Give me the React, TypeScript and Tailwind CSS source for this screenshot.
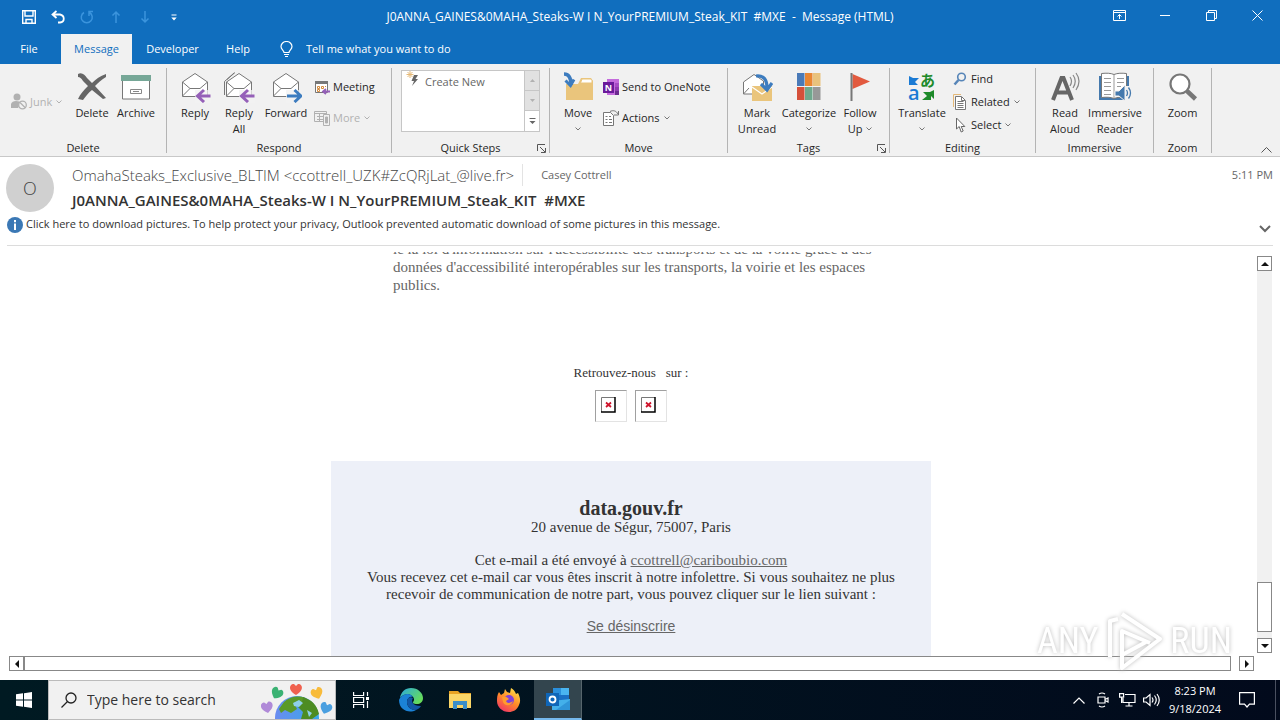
import type { ReactNode } from "react";
import clsx from "clsx";

/* ---------- Small shared pieces ---------- */

function Caret({ className }: { className?: string }) {
  return (
    <svg width="6" height="4" viewBox="0 0 6 4" className={clsx("shrink-0", className)} fill="none" stroke="currentColor">
      <path d="M.5.5 3 3 5.500.5" />
    </svg>
  );
}

interface LargeButtonProps {
  icon: ReactNode;
  lines: string[];
  width: string;
  caret?: "below" | "inline";
}

function LargeButton({ icon, lines, width, caret }: LargeButtonProps) {
  return (
    <button className={clsx("flex flex-col items-center whitespace-nowrap leading-4", width)}>
      <span className="flex h-[37px] items-center justify-center">{icon}</span>
      {lines.map((line, i) => (
        <span key={line} className="flex items-center gap-1">
          {line}
          {caret === "inline" && i === lines.length - 1 && <Caret className="text-[#777]" />}
        </span>
      ))}
      {caret === "below" && <Caret className="mt-1.5 text-[#777]" />}
    </button>
  );
}

interface SmallButtonProps {
  icon: ReactNode;
  label: string;
  caret?: boolean;
  disabled?: boolean;
}

function SmallButton({ icon, label, caret, disabled }: SmallButtonProps) {
  return (
    <button disabled={disabled} className={clsx("flex items-center whitespace-nowrap leading-4", disabled && "text-[#b1b1b1]")}>
      <span className="mr-[3px] flex w-4 justify-center">{icon}</span>
      {label}
      {caret && <Caret className={clsx("ml-1", disabled ? "text-[#b1b1b1]" : "text-[#777]")} />}
    </button>
  );
}

interface GroupProps {
  label: string;
  width: string;
  launcher?: boolean;
  children: ReactNode;
}

function Group({ label, width, launcher, children }: GroupProps) {
  return (
    <section className={clsx("relative flex shrink-0 flex-col border-r border-[#b4b4b4]", width)}>
      <div className="flex min-h-0 flex-1 items-start">{children}</div>
      <p className="text-center leading-[11px]">{label}</p>
      {launcher && (
        <button aria-label={`${label} options`} className="absolute right-[3px] bottom-0">
          <svg width="9" height="9" viewBox="0 0 9 9" fill="none" stroke="#555">
            <path d="M.5 7V.500H8M3 3l5 5M8.500 4v4.500H4" />
          </svg>
        </button>
      )}
    </section>
  );
}

/* ---------- Ribbon icons ---------- */

function Envelope({ arrow, double }: { arrow: "left" | "right"; double?: boolean }) {
  return (
    <svg width="32" height="32" viewBox="0 0 32 32" fill="none">
      {double && <path d="M1.500 24V10.500L11 2M4 8.500 12 1.500" stroke="#777" />}
      <path d="M3.500 11 16 2.500 28.500 11v14.500h-25z" fill="#fff" stroke="#777" />
      <path d="M3.500 11 11 17.500h10L28.500 11M3.500 25 11 17.500" stroke="#777" />
      <path d="M16 19h16v13H16z" fill="#f1f1f1" opacity=".75" />
      {arrow === "left" ? (
        <path d="M31.500 25H19M25 19l-6.500 6 6.500 6" stroke="#9560b8" strokeWidth="3" />
      ) : (
        <path d="M17 25h13M24.500 19l6.500 6-6.500 6" stroke="#3d7cbf" strokeWidth="3" />
      )}
    </svg>
  );
}

function DeleteIcon() {
  return (
    <svg width="32" height="30" viewBox="0 0 32 30" fill="#666">
      <path d="M2 2c4-2 7 1 9 4l5 5c4-4 8-7 14-9v3c-5 3-8 6-11 9l11 12-3 1-11-9c-4 3-6 6-9 10l-5-1c2-5 6-9 10-13L7 9C5 6 4 5 2 5z" />
    </svg>
  );
}

function ArchiveIcon() {
  return (
    <svg width="32" height="28" viewBox="0 0 32 28" fill="none">
      <path d="M2.500 7.500h27V26h-27z" fill="#fff" stroke="#777" />
      <path d="M1 2h30v6H1z" fill="#76a797" />
      <path d="M10.500 16.500h11v4h-11zM13 18.500h6" stroke="#888" />
    </svg>
  );
}

function JunkIcon() {
  return (
    <svg width="16" height="17" viewBox="0 0 16 17" fill="none">
      <circle cx="6" cy="4" r="3.500" fill="#b1b1b1" />
      <path d="M0 15V11q1-3 5-3t5 2l-3 5z" fill="#b1b1b1" />
      <circle cx="11.500" cy="12" r="3.800" fill="#f1f1f1" stroke="#b1b1b1" strokeWidth="1.300" />
      <path d="m9 9.500 5 5" stroke="#b1b1b1" strokeWidth="1.300" />
    </svg>
  );
}

function MeetingIcon() {
  return (
    <svg width="16" height="15" viewBox="0 0 16 15" fill="none">
      <path d="M1.500 2.500h12v10h-12z" fill="#fff" stroke="#777" />
      <path d="M1 1h13v3H1z" fill="#777" />
      <path d="M3.500 6.500h2v2h-2zM7.500 6.500h2v2h-2zM3.500 9.500h2v2h-2zM11 6.500h1" stroke="#d58a3c" />
      <path d="M16 11.500H9.500M12 9l-3 2.500L12 14" stroke="#9560b8" strokeWidth="1.800" />
    </svg>
  );
}

function MoreIcon() {
  return (
    <svg width="17" height="16" viewBox="0 0 17 16" fill="none" stroke="#b1b1b1" className="shrink-0">
      <path d="M.5 1.500h12v10H.500zM.5 3.500h12M3 6.500h6M3 9.500h6M5.500 4v7" />
      <path d="M9.500 4.500h6v11h-6z" fill="#f1f1f1" />
      <path d="M11.500 7h2v6h-2z" fill="#b1b1b1" />
    </svg>
  );
}

function QuickStepIcon() {
  return (
    <svg width="16" height="16" viewBox="0 0 16 16" fill="none">
      <path d="M4 0v7M.5 3.500h7M1.500 1l5 5M6.500 1l-5 5" stroke="#e5b978" />
      <path d="M8 4h4L9.500 8H12l-6 7 2-5H5.500z" fill="#666" />
    </svg>
  );
}

function MoveIcon() {
  return (
    <svg width="32" height="32" viewBox="0 0 32 32" fill="none">
      <path d="M4 29V13h12l3-6h10l2 3v19z" fill="#eac57c" />
      <path d="m20 8-1.500 4H30V9.500L29 8z" fill="#fff" stroke="#eac57c" />
      <path d="M2 3c5 0 7 4 7 11" stroke="#3d7cbf" strokeWidth="3.500" />
      <path d="m3.500 9.500 5 5 3.500-6" stroke="#3d7cbf" strokeWidth="3" />
    </svg>
  );
}

function OneNoteIcon() {
  return (
    <svg width="16" height="16" viewBox="0 0 16 16">
      <path d="M4 0h12v16H4z" fill="#c46bdc" />
      <path d="M12 4h4v4h-4z" fill="#a64bc4" />
      <path d="M12 8h4v4h-4z" fill="#8f3bb0" />
      <path d="M12 12h4v4h-4z" fill="#6b2a8f" />
      <path d="M0 3h11v11H0z" fill="#6a1a9a" />
      <text x="5.500" y="12" textAnchor="middle" fontSize="9" fontWeight="700" fill="#fff">N</text>
    </svg>
  );
}

function ActionsIcon() {
  return (
    <svg width="17" height="16" viewBox="0 0 17 16" fill="none" stroke="#777" className="shrink-0">
      <path d="M.5 2.500h7l3 3v10H.500z" fill="#fff" />
      <path d="M2.500 6.500h2M6 6.500h2M2.500 9.500h2M6 9.500h3M2.500 12.500h2M6 12.500h3M7 1.500c3-1.500 6-1 8 2.500M15.500 1v4H11" />
    </svg>
  );
}

function MarkUnreadIcon() {
  return (
    <svg width="32" height="32" viewBox="0 0 32 32" fill="none">
      <path d="M2.500 11 13 3.500 22.500 10v13h-20z" fill="#fff" stroke="#777" />
      <path d="M2.500 23 8 17" stroke="#777" />
      <path d="M11 15h20v15H11z" fill="#eac57c" />
      <path d="m11 16 10 7 10-7" stroke="#fff" strokeWidth="1.200" />
      <path d="M15 5c8-1 11 4 11 12M20 13l6 6 5-7" stroke="#3d7cbf" strokeWidth="3.200" />
    </svg>
  );
}

function CategorizeIcon() {
  const colors = ["#4a7ab8", "#e98632", "#e9c27c", "#d5503a", "#6fa88d", "#989898"];
  return (
    <svg width="24" height="28" viewBox="0 0 24 28">
      {colors.map((c, i) => (
        <rect key={c} x={(i % 3) * 8} y={i < 3 ? 0 : 14} width="7.500" height="13" fill={c} />
      ))}
    </svg>
  );
}

function FlagIcon() {
  return (
    <svg width="24" height="30" viewBox="0 0 24 30">
      <path d="M4.500 2 22 9.500 4.500 17z" fill="#e25a3f" />
      <path d="M2.500 1h2v28h-2z" fill="#777" />
    </svg>
  );
}

function TranslateIcon() {
  return (
    <svg width="30" height="34" viewBox="-1 -3 30 34" className="overflow-visible">
      <text x="12" y="13" fontSize="15" fontWeight="700" fill="#1e8a2a" fontFamily="Noto Sans CJK JP, sans-serif">あ</text>
      <text x="0" y="27" fontSize="20" fontWeight="600" fill="#1a7ad4">a</text>
      <path d="M1 3v9h9l-3-3 4-4H5z" fill="#1a7ad4" />
      <path d="M26 17v9l-3-3v4h-9l5-4-4-4h7z" fill="#1e8a2a" />
    </svg>
  );
}

function FindIcon() {
  return (
    <svg width="14" height="14" viewBox="0 0 14 14" fill="none" stroke="#5685b8">
      <circle cx="8.500" cy="5" r="3.800" strokeWidth="1.600" />
      <path d="M5.500 8 1.500 12.500" strokeWidth="2.500" />
    </svg>
  );
}

function RelatedIcon() {
  return (
    <svg width="14" height="16" viewBox="0 0 14 16" fill="none" stroke="#777">
      <path d="M.5 13V.500H8" stroke="#e5b978" />
      <path d="M2.500 2.500h6l4 4v9h-10z" fill="#fff" />
      <path d="M4.500 7.500h6M4.500 9.500h6M4.500 11.500h6M4.500 13.500h6M8.500 3v3.500H12" />
    </svg>
  );
}

function SelectIcon() {
  return (
    <svg width="12" height="16" viewBox="0 0 12 16">
      <path d="M2.500 1v11l2.700-2.500L7.200 15l2-1-2-4.500h3.600z" fill="#fff" stroke="#666" />
    </svg>
  );
}

function ReadAloudIcon() {
  return (
    <svg width="30" height="30" viewBox="0 0 30 30" fill="none">
      <path d="M3 28 11.500 6h2L22 28M6.500 20.500h12" stroke="#666" strokeWidth="4" />
      <path d="M20 5q3 4 0 9M23 3q4.500 6 0 13M26 1q6 8 0 17" stroke="#888" strokeWidth="1.200" />
    </svg>
  );
}

function ReaderIcon() {
  return (
    <svg width="34" height="30" viewBox="0 0 34 30" fill="none">
      <path d="M1 4h30v24H1z" fill="#4479ad" />
      <path d="M3.500 1.500c5-.5 9-.5 12.500 1 3.500-1.500 8-1.500 12.500-1v24c-5-.5-9-.5-12.500 1-3.500-1.500-7.500-1.500-12.500-1z" fill="#fff" stroke="#777" />
      <path d="M16 3v23M6 6.500h7M6 10.500h7M6 14.500h7M6 18.500h7M6 22.500h7M19 6.500h7M19 10.500h7M19 14.500h4" stroke="#999" />
      <path d="M26 14h8v16h-8z" fill="#f1f1f1" />
      <path d="M17 19h4l6-6v16l-6-5h-4z" fill="#4479ad" stroke="#f1f1f1" />
      <path d="M28.500 18q2 3 0 6M30.500 15.500q4 5.500 0 11" stroke="#4479ad" strokeWidth="1.300" />
    </svg>
  );
}

function ZoomIcon() {
  return (
    <svg width="30" height="30" viewBox="0 0 30 30" fill="none" stroke="#777">
      <circle cx="12" cy="12" r="9.500" fill="#fff" strokeWidth="2.200" />
      <path d="m19 19 8.500 8" strokeWidth="4.500" />
    </svg>
  );
}

/* ---------- Title bar and ribbon ---------- */

function TitleBar() {
  return (
    <div className="flex h-[34px] items-center text-white">
      <div className="flex flex-1">
        <button aria-label="Save" className="ml-3.5 flex w-[29px] justify-center">
          <svg width="14" height="14" viewBox="0 0 14 14" fill="none" stroke="currentColor" strokeWidth="1.400">
            <path d="M.7.700h12.600v12.600H.7zM3 1v5h8V1M4 13V9.500h6V13" />
          </svg>
        </button>
        <button aria-label="Undo" className="flex w-[29px] justify-center">
          <svg width="14" height="14" viewBox="0 0 14 14" fill="none" stroke="currentColor" strokeWidth="1.800">
            <path d="M5.500 1 1.500 4.500l4 3.500M2 4.500h7c5 1 5 7.500 0 8H7" />
          </svg>
        </button>
        <button aria-label="Redo" disabled className="flex w-[29px] justify-center text-[#3b94dd]">
          <svg width="14" height="14" viewBox="0 0 14 14" fill="none" stroke="currentColor" strokeWidth="1.500">
            <path d="M4 2.500a5.500 5.500 0 1 0 5.500 0M9 6V1.500h4" />
          </svg>
        </button>
        <button aria-label="Previous item" disabled className="flex w-[29px] justify-center text-[#3b94dd]">
          <svg width="10" height="14" viewBox="0 0 10 14" fill="none" stroke="currentColor" strokeWidth="1.500">
            <path d="M5 13V2M1.500 5.500 5 2l3.500 3.500" />
          </svg>
        </button>
        <button aria-label="Next item" disabled className="flex w-[29px] justify-center text-[#3b94dd]">
          <svg width="10" height="14" viewBox="0 0 10 14" fill="none" stroke="currentColor" strokeWidth="1.500">
            <path d="M5 1v11M1.500 8.500 5 12l3.500-3.500" />
          </svg>
        </button>
        <button aria-label="Customize toolbar" className="flex w-[29px] items-center justify-center">
          <svg width="6" height="7" viewBox="0 0 6 7" fill="currentColor">
            <path d="M.5.500h5v1h-5zM.3 3.500h5.400L3 6.500z" />
          </svg>
        </button>
      </div>
      <h1 className="text-xs whitespace-pre">J0ANNA_GAINES&amp;0MAHA_Steaks-W I N_YourPREMIUM_Steak_KIT  #MXE  -  Message (HTML)</h1>
      <div className="flex flex-1 justify-end pb-1">
        <button aria-label="Ribbon display options" className="flex w-[46px] items-center justify-center">
          <svg width="13" height="11" viewBox="0 0 13 11" fill="none" stroke="currentColor">
            <path d="M.5.500h12v10H.500zM.5 2.500h12M6.500 9V4.500M4.500 6.500l2-2 2 2" />
          </svg>
        </button>
        <button aria-label="Minimize" className="flex w-[46px] items-center justify-center">
          <svg width="10" height="11" viewBox="0 0 10 11" stroke="currentColor"><path d="M0 5.500h10" /></svg>
        </button>
        <button aria-label="Restore" className="flex w-[46px] items-center justify-center">
          <svg width="11" height="11" viewBox="0 0 11 11" fill="none" stroke="currentColor">
            <path d="M.5 2.500h8v8h-8zM2.500 2.500v-2h8v8h-2" />
          </svg>
        </button>
        <button aria-label="Close" className="flex w-[46px] items-center justify-center">
          <svg width="11" height="11" viewBox="0 0 11 11" stroke="currentColor"><path d="m.5.500 10 10M10.500.500l-10 10" /></svg>
        </button>
      </div>
    </div>
  );
}

function Tabs() {
  return (
    <nav className="flex h-[30px] items-stretch text-white">
      <button className="mr-[3px] w-[58px]">File</button>
      <button className="w-[71px] bg-[#f1f1f1] text-[#106ebe]">Message</button>
      <button className="w-[81px]">Developer</button>
      <button className="w-[50px]">Help</button>
      <label htmlFor="tell-me" className="flex items-center pl-[17px]">
        <svg width="13" height="17" viewBox="0 0 13 17" fill="none" stroke="currentColor" strokeWidth="1.200">
          <path d="M4 11.500C4 9.500 1 8.500 1 5.500a5.500 5 0 0 1 11 0c0 3-3 4-3 6zM4 13.500h5M5 15.500h3" />
        </svg>
      </label>
      <input id="tell-me" aria-label="Tell me what you want to do" placeholder="Tell me what you want to do" className="ml-[13px] w-60 bg-transparent outline-none placeholder:text-white" />
    </nav>
  );
}

function Ribbon() {
  return (
    <div className="flex h-[93px] border-b border-[#c8c8c8] bg-[#f1f1f1] pt-1 pb-[3px] text-[#262626]">
      <Group label="Delete" width="w-[167px]">
        <div className="flex w-[70px] pt-[25px] pl-[11px]">
          <SmallButton icon={<JunkIcon />} label="Junk" caret disabled />
        </div>
        <LargeButton icon={<DeleteIcon />} lines={["Delete"]} width="w-11" />
        <LargeButton icon={<ArchiveIcon />} lines={["Archive"]} width="w-11" />
      </Group>
      <Group label="Respond" width="w-[225px]">
        <div className="flex pl-1.5">
          <LargeButton icon={<Envelope arrow="left" />} lines={["Reply"]} width="w-11" />
          <LargeButton icon={<Envelope arrow="left" double />} lines={["Reply", "All"]} width="w-11" />
          <LargeButton icon={<Envelope arrow="right" />} lines={["Forward"]} width="w-[50px]" />
        </div>
        <div className="flex flex-col gap-[15px] pt-[11px] pl-[3px]">
          <SmallButton icon={<MeetingIcon />} label="Meeting" />
          <SmallButton icon={<MoreIcon />} label="More" caret disabled />
        </div>
      </Group>
      <Group label="Quick Steps" width="w-[158px]" launcher>
        <div className="mx-[9px] mt-0.5 flex h-[62px] flex-1 border border-[#c6c6c6] bg-white">
          <button className="flex flex-1 items-start gap-[3px] pl-1 leading-[22px] text-[#666]">
            <QuickStepIcon />
            Create New
          </button>
          <div className="flex w-[15px] flex-col border-l border-[#c6c6c6]">
            <button aria-label="Scroll up" disabled className="flex h-5 items-center justify-center border-b border-[#c6c6c6] bg-[#e1e1e1]">
              <svg width="5" height="3" viewBox="0 0 5 3" fill="#b1b1b1"><path d="M0 3h5L2.500 0z" /></svg>
            </button>
            <button aria-label="Scroll down" disabled className="flex h-5 items-center justify-center border-b border-[#c6c6c6] bg-[#e1e1e1]">
              <svg width="5" height="3" viewBox="0 0 5 3" fill="#b1b1b1"><path d="M0 0h5L2.500 3z" /></svg>
            </button>
            <button aria-label="More quick steps" className="flex flex-1 items-center justify-center">
              <svg width="7" height="7" viewBox="0 0 7 7" fill="#666"><path d="M.5 0h6v1h-6zM.5 3h6L3.500 6z" /></svg>
            </button>
          </div>
        </div>
      </Group>
      <Group label="Move" width="w-[178px]">
        <div className="pl-1">
          <LargeButton icon={<MoveIcon />} lines={["Move"]} width="w-12" caret="below" />
        </div>
        <div className="flex flex-col gap-[15px] pt-[11px] pl-px">
          <SmallButton icon={<OneNoteIcon />} label="Send to OneNote" />
          <SmallButton icon={<ActionsIcon />} label="Actions" caret />
        </div>
      </Group>
      <Group label="Tags" width="w-[162px]" launcher>
        <div className="flex pl-[5px]">
          <LargeButton icon={<MarkUnreadIcon />} lines={["Mark", "Unread"]} width="w-12" />
          <LargeButton icon={<CategorizeIcon />} lines={["Categorize"]} width="w-14" caret="below" />
          <LargeButton icon={<FlagIcon />} lines={["Follow", "Up"]} width="w-[46px]" caret="inline" />
        </div>
      </Group>
      <Group label="Editing" width="w-[146px]">
        <div className="pl-1">
          <LargeButton icon={<TranslateIcon />} lines={["Translate"]} width="w-14" caret="below" />
        </div>
        <div className="flex flex-col gap-[7px] pt-[3px] pl-0.5">
          <SmallButton icon={<FindIcon />} label="Find" />
          <SmallButton icon={<RelatedIcon />} label="Related" caret />
          <SmallButton icon={<SelectIcon />} label="Select" caret />
        </div>
      </Group>
      <Group label="Immersive" width="w-[118px]">
        <div className="flex pl-[7px]">
          <LargeButton icon={<ReadAloudIcon />} lines={["Read", "Aloud"]} width="w-11" />
          <LargeButton icon={<ReaderIcon />} lines={["Immersive", "Reader"]} width="w-14" />
        </div>
      </Group>
      <Group label="Zoom" width="w-[58px]">
        <LargeButton icon={<ZoomIcon />} lines={["Zoom"]} width="w-full" />
      </Group>
      <div className="flex flex-1 items-end justify-end pr-2">
        <button aria-label="Collapse the ribbon">
          <svg width="11" height="6" viewBox="0 0 11 6" fill="none" stroke="#555"><path d="m.5 5.500 5-5 5 5" /></svg>
        </button>
      </div>
    </div>
  );
}

/* ---------- Message ---------- */

function MessageHeader() {
  return (
    <header className="mx-[7px] flex flex-col border-b border-[#dcdcdc] pb-2 text-[#444]">
      <div className="flex pt-[7px]">
        <div className="-ml-px flex size-12 shrink-0 items-center justify-center rounded-full bg-[#d0d0d0] text-lg font-light">O</div>
        <div className="ml-[18px] flex-1">
          <div className="flex h-[22px] items-center">
            <span className="text-[15px] font-light whitespace-nowrap">OmahaSteaks_Exclusive_BLTIM &lt;ccottrell_UZK#ZcQRjLat_@live.fr&gt;</span>
            <span className="mr-[18px] ml-2 h-full border-l border-[#e3e3e3]" />
            <span className="text-[#666]">Casey Cottrell</span>
            <span className="ml-auto text-[#666]">5:11 PM</span>
          </div>
          <h2 className="mt-[3px] text-[15px] leading-[22px] font-semibold whitespace-pre text-[#333]">J0ANNA_GAINES&amp;0MAHA_Steaks-W I N_YourPREMIUM_Steak_KIT  #MXE</h2>
        </div>
      </div>
      <div className="flex h-[25px] items-center">
        <svg width="16" height="16" viewBox="0 0 16 16" className="mr-[3px] shrink-0">
          <circle cx="8" cy="8" r="8" fill="#3b78b5" />
          <path d="M7 6.500h2V13H7zM7 3h2v2.200H7z" fill="#fff" />
        </svg>
        <button className="text-[#333]">
          Click here to download pictures. To help protect your privacy, Outlook prevented automatic download of some pictures in this message.
        </button>
        <button aria-label="Expand header" className="mt-2 mr-0.5 ml-auto">
          <svg width="12" height="8" viewBox="0 0 12 8" fill="none" stroke="#666" strokeWidth="2"><path d="m1 1 5 5 5-5" /></svg>
        </button>
      </div>
    </header>
  );
}

function BlockedPicture() {
  return (
    <a href="#picture" aria-label="Blocked picture" className="block size-8 border border-t-[#a0a0a0] border-r-[#e3e3e3] border-b-[#e3e3e3] border-l-[#a0a0a0] pt-1.5 pl-[5px]">
      <svg width="15" height="16" viewBox="0 0 15 16" fill="none">
        <path d="M.5 15V.500H14" stroke="#777" />
        <path d="M14 0v15H0" stroke="#000" strokeWidth="1.500" />
        <path d="m5 5.500 5 4.500M10 5.500l-5 4.500" stroke="#d0142c" strokeWidth="1.800" />
      </svg>
    </a>
  );
}

function MessageBody() {
  return (
    <article className="mx-auto flex h-full w-[600px] flex-col justify-end overflow-hidden font-['Liberation_Serif','Times_New_Roman',serif] text-[15px] leading-[18px] text-[#333]">
      <p className="mx-[62px] whitespace-nowrap text-[#666]">
        le la loi d'information sur l'accessibilité des transports et de la voirie grâce à des
        <br />
        données d'accessibilité interopérables sur les transports, la voirie et les espaces
        <br />
        publics.
      </p>
      <p className="mt-[70px] text-center text-[13px] whitespace-pre">Retrouvez-nous   sur :</p>
      <div className="mt-2 flex justify-center gap-2">
        <BlockedPicture />
        <BlockedPicture />
      </div>
      <footer className="mt-[39px] bg-[#edf0f8] pt-9 pb-[21px] text-center leading-[17px]">
        <h3 className="text-xl leading-[22px] font-semibold">data.gouv.fr</h3>
        <p>20 avenue de Ségur, 75007, Paris</p>
        <p className="mt-4 whitespace-nowrap">
          Cet e-mail a été envoyé à{" "}
          <a href="mailto:ccottrell@cariboubio.com" className="text-[#666] underline">ccottrell@cariboubio.com</a>
          <br />
          Vous recevez cet e-mail car vous êtes inscrit à notre infolettre. Si vous souhaitez ne plus
          <br />
          recevoir de communication de notre part, vous pouvez cliquer sur le lien suivant :
        </p>
        <a href="#unsubscribe" className="mx-auto mt-3.5 block w-fit font-['Liberation_Sans',Arial,sans-serif] text-sm leading-[18px] text-[#666] underline">Se désinscrire</a>
      </footer>
    </article>
  );
}

function ScrollArrow({ label, d }: { label: string; d: string }) {
  return (
    <button aria-label={label} className="flex size-[15px] shrink-0 items-center justify-center border border-[#888] bg-white">
      <svg width="8" height="8" viewBox="0 0 8 8" fill="#111"><path d={d} /></svg>
    </button>
  );
}

function Watermark() {
  return (
    <div className="pointer-events-none absolute right-12 -bottom-0.5 flex h-16 items-center gap-1.5 font-['Roboto_Condensed','Liberation_Sans',sans-serif] text-4xl text-white drop-shadow-[0_0_2px_#bbb]">
      <span>ANY</span>
      <svg width="60" height="60" viewBox="0 0 60 60" fill="none" stroke="currentColor" strokeWidth="4" strokeLinejoin="round">
        <path d="M18 3 56 28 18 57V20l28 12M6 46V10l8-2" />
        <path d="M18 44 42 31" />
      </svg>
      <span>RUN</span>
    </div>
  );
}

/* ---------- Taskbar ---------- */

function Heart({ x, y, color, rotate }: { x: number; y: number; color: string; rotate: number }) {
  return <path transform={`translate(${x} ${y}) rotate(${rotate})`} d="M0 6C-10 0-5-6-2-5l2 2 2-2C5-6 10 0 0 6z" fill={color} />;
}

function EarthDoodle() {
  return (
    <svg width="74" height="38" viewBox="0 0 74 38" className="shrink-0 overflow-hidden">
      <defs>
        <linearGradient id="sea" x1="0" x2="1">
          <stop offset="0" stopColor="#6a8cf0" />
          <stop offset="1" stopColor="#38a8e8" />
        </linearGradient>
      </defs>
      <circle cx="36" cy="37" r="22" fill="url(#sea)" />
      <path d="M23 21c5-5 14-7 21-4l-3 5-7 2 2 4-6 4-6-3-4 3-2-4z" fill="#5a9a28" />
      <path d="M42 16c9 3 14 8 16 17l-7 5H40l2-7-5-5 4-5z" fill="#4d8c22" />
      <path d="m32 22 6-3 4 3-4 4-5-1zM46 29l5 3-3 4z" fill="#8fd0e8" />
      <Heart x={35} y={8} color="#f0614f" rotate={0} />
      <Heart x={16} y={12} color="#3bb273" rotate={30} />
      <Heart x={56} y={12} color="#f8bb3a" rotate={-20} />
      <Heart x={6} y={26} color="#b08ad8" rotate={-10} />
      <Heart x={65} y={27} color="#4a9fe0" rotate={20} />
    </svg>
  );
}

function EdgeIcon() {
  return (
    <svg width="24" height="24" viewBox="0 0 24 24">
      <defs>
        <linearGradient id="edge" x1="0" y1="0" x2="1" y2=".6">
          <stop offset="0" stopColor="#2aa8e0" />
          <stop offset="1" stopColor="#66dc5a" />
        </linearGradient>
      </defs>
      <path d="M1 10C2 4 6 0 12 0c7 0 12 5 12 10 0 4-3 6-6 6-4 0-4-1-4-2 1-1 1-2 1-3-1-5-9-7-14-1z" fill="url(#edge)" />
      <path d="M1 10c4-5 11-5 13-1-3-1-6 1-6 5 0 5 4 8 9 8-7 4-17 0-17-10z" fill="#1b82d6" />
      <path d="M8 14c0-4 3-6 6-4-2 3-1 8 8 8-1 2-4 4-6 4-5 0-8-4-8-8z" fill="#1257a5" />
    </svg>
  );
}

function FolderIcon() {
  return (
    <svg width="22" height="20" viewBox="0 0 22 20">
      <path d="M0 1h9l2 2h11v15H0z" fill="#e8a323" />
      <path d="M0 4h22v14H0z" fill="#fbd667" />
      <path d="M4 11h14v8h-4v-4H8v4H4z" fill="#3c8fc9" />
    </svg>
  );
}

function FirefoxIcon() {
  return (
    <svg width="24" height="24" viewBox="0 0 24 24">
      <defs>
        <linearGradient id="fox" x1=".8" y1="0" x2=".2" y2="1">
          <stop offset="0" stopColor="#ffe14a" />
          <stop offset=".5" stopColor="#ff8a28" />
          <stop offset="1" stopColor="#f0306a" />
        </linearGradient>
      </defs>
      <path d="M2 4 4 7l3-2 1-4 2 3 3 1 1-5c2 1 4 3 5 6l2-1c2 4 3 8 1 12-2 5-6 7-10 7C5 24 0 19 0 13c0-3 0-6 2-9z" fill="url(#fox)" />
      <circle cx="12" cy="12" r="5" fill="#8141d8" />
      <path d="M5 9c3-1 5 0 7 2l-3 2c1 3 5 2 7 0-1 5-8 6-10 1z" fill="#ff9b2e" />
    </svg>
  );
}

function OutlookIcon() {
  return (
    <svg width="24" height="22" viewBox="0 0 24 22" fill="none">
      <path d="M7 0h16v16H7z" fill="#1a6fc4" />
      <path d="M7 0h8v7H7z" fill="#2a8fdc" />
      <path d="M15 0h8v7h-8z" fill="#4ab4f0" />
      <path d="M6 13 24 11v11H6z" fill="#43b0ea" />
      <path d="m24 12-14 10h14z" fill="#2f95d8" />
      <path d="M0 5h13v13H0z" fill="#0f66b8" />
      <circle cx="6.500" cy="11.500" r="3" stroke="#fff" strokeWidth="1.800" />
    </svg>
  );
}

function Taskbar() {
  return (
    <footer className="flex h-10 shrink-0 items-stretch bg-linear-to-r from-[#001a22] to-[#020a1c] text-white">
      <button aria-label="Start" className="flex w-12 items-center justify-center">
        <svg width="16" height="16" viewBox="0 0 16 16" fill="currentColor">
          <path d="M0 2.300 7 1.300v6.200H0zM8 1.200 16 0v7.500H8zM0 8.500h7v6.200l-7-1zM8 8.500h8V16l-8-1.200z" />
        </svg>
      </button>
      <div className="flex w-[288px] items-center border border-[#bbb] bg-[#f1f1f1] pl-3 text-[#333]">
        <label htmlFor="search">
          <svg width="16" height="16" viewBox="0 0 16 16" fill="none" stroke="#222" strokeWidth="1.300">
            <circle cx="10" cy="6" r="5" />
            <path d="M6.500 9.500.5 15.500" />
          </svg>
        </label>
        <input id="search" aria-label="Type here to search" placeholder="Type here to search" className="ml-2.5 min-w-0 flex-1 bg-transparent text-sm outline-none placeholder:text-[#333]" />
        <EarthDoodle />
      </div>
      <button aria-label="Task view" className="flex w-[50px] items-center justify-center">
        <svg width="16" height="16" viewBox="0 0 16 16" fill="none" stroke="currentColor" strokeWidth="1.200">
          <path d="M.6 0v3.500h10V0M.6 16v-3.500h10V16M.6 5.500h10v5H.6zM14.500 0v4M14.500 9v7" />
          <path d="M13 5h3v3h-3z" fill="currentColor" stroke="none" />
        </svg>
      </button>
      <button aria-label="Microsoft Edge" className="flex w-[50px] items-center justify-center"><EdgeIcon /></button>
      <button aria-label="File Explorer" className="flex w-12 items-center justify-center"><FolderIcon /></button>
      <button aria-label="Firefox" className="flex w-[50px] items-center justify-center"><FirefoxIcon /></button>
      <button aria-label="Outlook" className="flex w-12 items-center justify-center border-r border-b-2 border-r-[#56656c] border-b-[#76b9ed] bg-[#33454e]"><OutlookIcon /></button>
      <div className="ml-auto flex items-center">
        <button aria-label="Show hidden icons" className="flex w-6 justify-center">
          <svg width="12" height="7" viewBox="0 0 12 7" fill="none" stroke="currentColor" strokeWidth="1.200"><path d="m.5 6.500 5.500-5.500 5.500 5.500" /></svg>
        </button>
        <button aria-label="Meet now" className="flex w-6 justify-center">
          <svg width="12" height="16" viewBox="0 0 12 16" fill="none" stroke="currentColor" strokeWidth="1.200">
            <path d="M1 5h7v6H1zM8 7.500 11 6v4L8 8.500M2 2q3-2 6 0M2 14q3 2 6 0" />
          </svg>
        </button>
        <button aria-label="Network" className="flex w-6 justify-center">
          <svg width="17" height="14" viewBox="0 0 17 14" fill="none" stroke="currentColor" strokeWidth="1.200">
            <path d="M6 1.500h10v8H4V5M10 9.500v3.500M6.500 13h7M.6.600h4v3.500h-4zM2.600 4v6" />
          </svg>
        </button>
        <button aria-label="Volume" className="flex w-6 justify-center">
          <svg width="17" height="14" viewBox="0 0 17 14" fill="none" stroke="currentColor" strokeWidth="1.200">
            <path d="M.6 5h2.500L7 1.500v11L3.100 9H.6zM9 4.500q2 2.500 0 5M11.500 2.500q3.500 4.500 0 9M14 1q4.500 6 0 12" />
          </svg>
        </button>
        <button className="w-16 text-center leading-[18px]">
          8:23 PM
          <br />
          9/18/2024
        </button>
        <button aria-label="Notifications" className="flex w-10 justify-center">
          <svg width="16" height="16" viewBox="0 0 16 16" fill="none" stroke="currentColor" strokeWidth="1.200">
            <path d="M.6.600h14.800v11.500H10.500L8 15l-2.500-2.900H.6z" />
          </svg>
        </button>
        <span className="mr-1 ml-2 h-10 border-l border-[#4a5060]" />
      </div>
    </footer>
  );
}

export default function App() {
  return (
    <div className="flex h-screen flex-col overflow-hidden bg-white font-['Open_Sans','Segoe_UI',sans-serif] text-[11px]">
      <div className="shrink-0 bg-[#106ebe]">
        <TitleBar />
        <Tabs />
        <Ribbon />
      </div>
      <MessageHeader />
      <main className="relative mb-[9px] flex min-h-0 flex-1 flex-col pt-1.5">
        <div className="flex min-h-0 flex-1">
          <div className="min-w-0 flex-1 pl-[5px]">
            <MessageBody />
          </div>
          <div className="mt-1 mr-2 mb-[3px] flex w-[15px] flex-col bg-[#f1f1f1]">
            <ScrollArrow label="Scroll up" d="M0 6h8L4 2z" />
            <div className="mt-auto mb-1.5 h-[50px] border border-[#888] bg-white" />
            <ScrollArrow label="Scroll down" d="M0 2h8L4 6z" />
          </div>
        </div>
        <div className="mr-[26px] ml-[9px] flex">
          <ScrollArrow label="Scroll left" d="M6 0v8L2 4z" />
          <div className="mr-2 flex-1 border border-[#888] bg-white" />
          <ScrollArrow label="Scroll right" d="M2 0v8l4-4z" />
        </div>
        <Watermark />
      </main>
      <Taskbar />
    </div>
  );
}
